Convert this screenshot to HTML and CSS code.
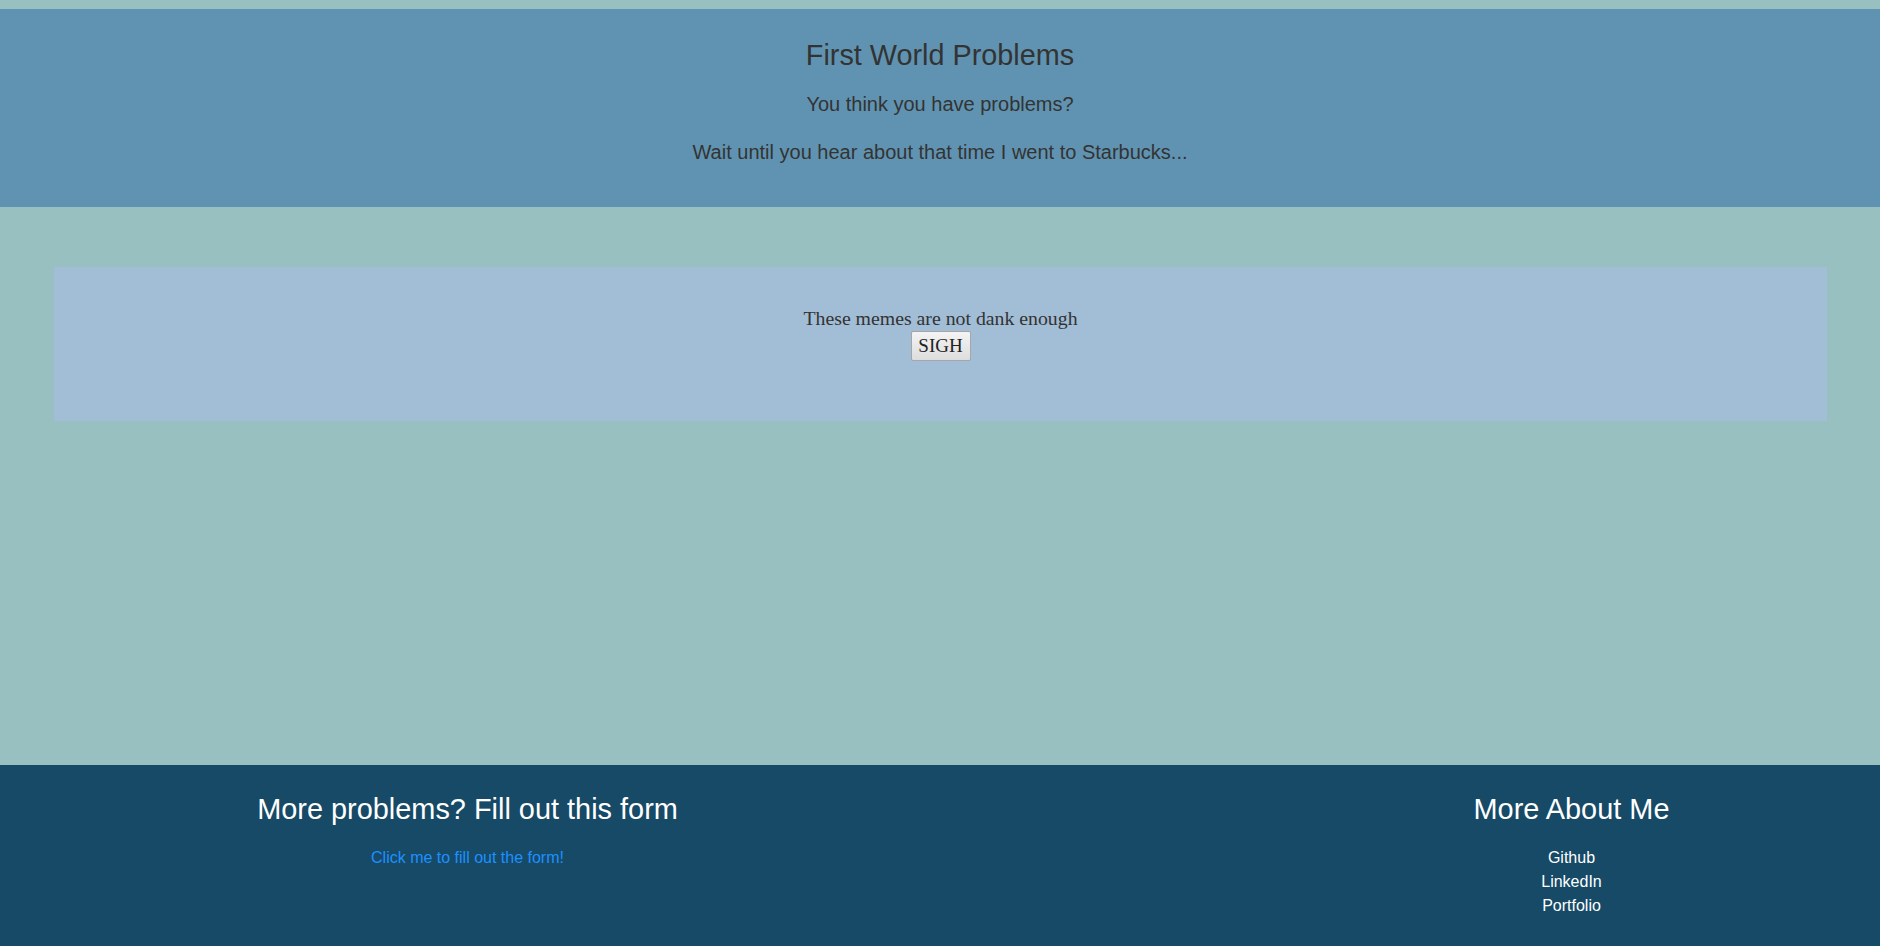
FILE: index.html
```html
<!DOCTYPE html>
<html lang="en">
<head>
<meta charset="utf-8">
<title>First World Problems</title>
<link rel="stylesheet" href="styles.css">
</head>
<body>
  <header class="hero">
    <h1 class="hero-title">First World Problems</h1>
    <p class="hero-text">You think you have problems?</p>
    <p class="hero-text">Wait until you hear about that time I went to Starbucks...</p>
  </header>
  <main class="content">
    <section class="meme-box">
      <div class="meme-text">These memes are not dank enough</div>
      <button class="sigh-btn" type="button">SIGH</button>
    </section>
  </main>
  <footer class="site-footer">
    <div class="footer-col">
      <h2 class="footer-title">More problems? Fill out this form</h2>
      <a class="form-link" href="#">Click me to fill out the form!</a>
    </div>
    <div class="footer-spacer"></div>
    <div class="footer-col">
      <h2 class="footer-title">More About Me</h2>
      <ul class="about-links">
        <li><a href="#">Github</a></li>
        <li><a href="#">LinkedIn</a></li>
        <li><a href="#">Portfolio</a></li>
      </ul>
    </div>
  </footer>
</body>
</html>
```

FILE: styles.css
```css
* {
  box-sizing: border-box;
}

html, body {
  margin: 0;
  padding: 0;
}

body {
  background: #98c0c0;
  font-family: "Liberation Sans", Arial, sans-serif;
  color: #333333;
  min-height: 100vh;
  display: flex;
  flex-direction: column;
  padding-top: 9px;
  overflow: hidden;
}

.hero {
  background: #6093b1;
  text-align: center;
  padding: 29px 0 40px;
  height: 198px;
}

.hero-title {
  margin: 0 0 18px;
  font-size: 28.8px;
  line-height: 34px;
  font-weight: normal;
  color: #333333;
}

.hero-text {
  margin: 0 0 19.5px;
  font-size: 20px;
  line-height: 28.8px;
  color: #333333;
}

.content {
  flex: 1;
  padding: 60px 53px 0 54px;
}

.meme-box {
  background: #a2bdd6;
  height: 154px;
  padding-top: 40px;
  display: flex;
  flex-direction: column;
  align-items: center;
  font-family: "Liberation Serif", "Times New Roman", serif;
}

.meme-text {
  font-size: 19.8px;
  line-height: 23px;
  color: #333333;
}

.sigh-btn {
  margin-top: 1px;
  width: 60px;
  height: 30px;
  padding: 0;
  font-family: "Liberation Serif", "Times New Roman", serif;
  font-size: 19px;
  color: #222222;
  background: linear-gradient(#f4f4f4, #dddddd);
  border: 1px solid #a6a6a6;
  border-radius: 2px;
}

.site-footer {
  background: #164a67;
  height: 181px;
  display: grid;
  grid-template-columns: 935fr 328fr 617fr;
  padding-top: 27px;
  text-align: center;
}

.footer-title {
  margin: 0 0 20px;
  font-size: 28.9px;
  line-height: 34px;
  font-weight: normal;
  color: #ffffff;
}

.form-link {
  display: block;
  font-size: 16px;
  line-height: 24px;
  color: #1e90ff;
  text-decoration: none;
}

.about-links {
  list-style: none;
  margin: 0;
  padding: 0;
}

.about-links li {
  font-size: 16px;
  line-height: 24px;
}

.about-links a {
  color: #ffffff;
  text-decoration: none;
}
```
